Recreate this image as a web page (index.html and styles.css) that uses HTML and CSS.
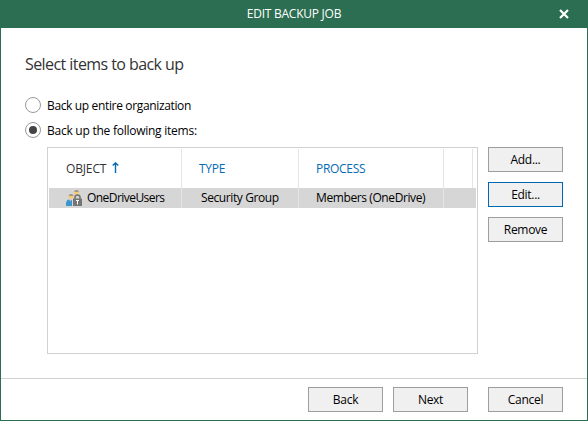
FILE: index.html
```html
<!DOCTYPE html>
<html lang="en">
<head>
<meta charset="utf-8">
<title>Edit Backup Job</title>
<link rel="stylesheet" href="styles.css">
</head>
<body>
<div class="dialog">
  <header class="titlebar">
    <span class="title">EDIT BACKUP JOB</span>
    <svg class="close" width="10" height="10" viewBox="0 0 10 10"><path d="M1 1 9 9M9 1 1 9"/></svg>
  </header>
  <main class="content">
    <h1 class="heading">Select items to back up</h1>
    <div class="option"><span class="radio"></span><span class="label entire">Back up entire organization</span></div>
    <div class="option"><span class="radio checked"></span><span class="label following">Back up the following items:</span></div>
    <div class="items">
      <div class="list">
        <div class="row head">
          <div class="cell"><span class="object">OBJECT</span><svg class="sort" width="7" height="12" viewBox="0 0 7 12"><path d="M3.5 11V1M.7 3.600 3.500.9 6.300 3.600"/></svg></div>
          <div class="cell link"><span>TYPE</span></div>
          <div class="cell link"><span>PROCESS</span></div>
          <div class="cell"></div>
        </div>
        <div class="row selected">
          <div class="cell">
            <svg class="group" width="16" height="16" viewBox="0 0 16 16">
              <circle cx="10.500" cy="2.600" r="2.500" fill="#f5cb79"/>
              <path d="M8 2C8.500.6 9.300 0 10.500 0s2 .6 2.500 2z" fill="#a19a8c"/>
              <circle cx="5" cy="6.600" r="2.500" fill="#f5cb79"/>
              <path d="M2.500 6C3 4.600 3.800 4 5 4s2 .6 2.500 2z" fill="#a19a8c"/>
              <path d="M0 16v-2.500c0-2.200 1.200-4 3-4L4.500 11 6 9.500V16z" fill="#3c95cd"/>
              <path d="M9 9.500V7.500a2.500 2.500 0 0 1 5 0v2" fill="none" stroke="#757575" stroke-width="1.600"/>
              <rect x="7" y="8.500" width="9" height="7.500" rx=".5" fill="#757575"/>
              <path d="M10 10.500h3M11.500 10.500v4" stroke="#fff"/>
            </svg>
            <span class="user">OneDriveUsers</span>
          </div>
          <div class="cell inset"><span class="type">Security Group</span></div>
          <div class="cell"><span class="members">Members (OneDrive)</span></div>
          <div class="cell"></div>
        </div>
      </div>
      <div class="actions">
        <button class="button">Add...</button>
        <button class="button primary">Edit...</button>
        <button class="button">Remove</button>
      </div>
    </div>
  </main>
  <footer class="footer">
    <button class="button">Back</button>
    <button class="button">Next</button>
    <button class="button cancel">Cancel</button>
  </footer>
</div>
</body>
</html>
```
FILE: styles.css
```css
* { box-sizing: border-box; }
body {
  margin: 0;
  font: 12px/16px "Open Sans", "Noto Sans", sans-serif;
  letter-spacing: -0.3px;
  color: #000;
}
span { white-space: nowrap; }
.dialog {
  width: 588px;
  height: 421px;
  display: flex;
  flex-direction: column;
  background: #fff;
  border: 1px solid #2b6e51;
  border-top: 0;
}
.titlebar {
  height: 28px;
  flex: none;
  display: grid;
  grid-template-columns: 1fr auto 1fr;
  align-items: center;
  padding-bottom: 1px;
  background: #2b6e51;
  color: #fff;
}
.title { grid-column: 2; letter-spacing: -0.25px; }
.close { justify-self: end; margin-right: 18px; fill: none; stroke: #fff; stroke-width: 2.2; }
.content { flex: 1; padding: 24px 24px 0; }
.heading { margin: 0 0 21px; font-size: 16px; line-height: 24px; font-weight: 400; letter-spacing: -0.57px; color: #333; }
.option { height: 16px; margin-bottom: 9px; display: flex; align-items: center; gap: 6px; }
.label { padding-top: 2px; }
.entire { letter-spacing: -0.35px; }
.following { letter-spacing: -0.25px; }
.radio { width: 16px; height: 16px; border: 1px solid #999; border-radius: 50%; display: grid; place-items: center; }
.checked::after { content: ""; width: 8px; height: 8px; border-radius: 50%; background: #444; }
.items { display: flex; gap: 10px; margin: 0 0 0 22px; }
.list { width: 431px; height: 207px; border: 1px solid #d0d0d0; padding: 1px; }
.row { display: grid; grid-template-columns: 133px 117px 145px 29px; }
.cell { display: flex; align-items: center; padding-left: 17px; border-right: 1px solid #e5e5e5; }
.head { height: 39px; color: #333; }
.object { letter-spacing: -0.15px; }
.selected { height: 20px; background: #d6d6d6; }
.selected .cell:last-child { border: 0; }
.inset { padding-left: 19px; }
.user { letter-spacing: -0.55px; }
.type { letter-spacing: -0.4px; }
.members { letter-spacing: -0.4px; }
.link { color: #066bb4; }
.sort { margin: -2px 0 0 6px; fill: none; stroke: #066bb4; stroke-width: 1.4; }
.group { margin-right: 5px; flex: none; }
.actions { display: flex; flex-direction: column; gap: 10px; }
.button {
  width: 75px;
  height: 25px;
  padding: 0;
  border: 1px solid #9d9d9d;
  background: #f0f0f0;
  color: #000;
  font: inherit;
  letter-spacing: inherit;
}
.primary { border-color: #0067b5; }
.footer { height: 42px; flex: none; display: flex; justify-content: flex-end; gap: 10px; padding: 8px 24px 0 0; border-top: 1px solid #d0d0d0; }
.cancel { margin-left: 10px; }
```
